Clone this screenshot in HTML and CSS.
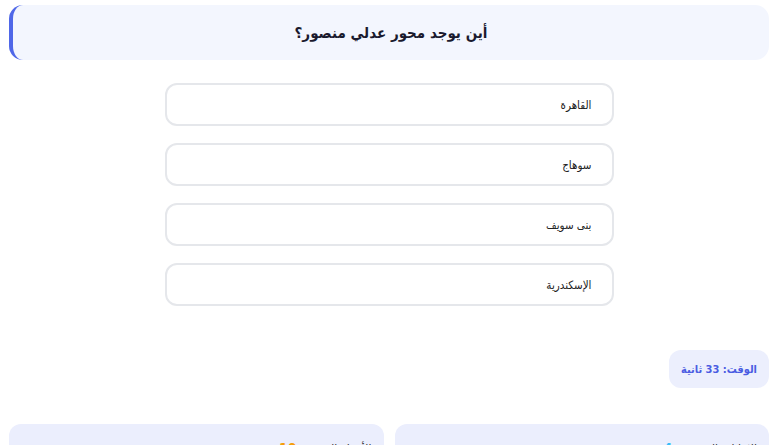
FILE: index.html
```html
<!DOCTYPE html>
<html lang="ar" dir="rtl">
<head>
<meta charset="utf-8">
<link rel="stylesheet" href="styles.css">
</head>
<body>
<div class="page">
  <div class="question">أين يوجد محور عدلي منصور؟</div>
  <div class="options">
    <div class="option">القاهرة</div>
    <div class="option">سوهاج</div>
    <div class="option">بنى سويف</div>
    <div class="option">الإسكندرية</div>
  </div>
  <div class="timer-row">
    <div class="timer">الوقت: 33 ثانية</div>
  </div>
  <div class="stats">
    <div class="stat">الإجابات الصحيحة: <span class="num blue">4</span></div>
    <div class="stat">الأسئلة المتبقية: <span class="num orange">10</span></div>
  </div>
</div>
</body>
</html>
```
FILE: styles.css
```css
html, body {
  margin: 0;
  padding: 0;
  background: #ffffff;
}
body {
  font-family: "DejaVu Sans Condensed", "DejaVu Sans", sans-serif;
  color: #1f2937;
}
.page {
  padding: 5px 11px 0 9px;
  display: flex;
  flex-direction: column;
}
.question {
  background: #f3f6fe;
  border-left: 4px solid #4f67e8;
  border-radius: 14px;
  height: 55px;
  display: flex;
  align-items: center;
  justify-content: center;
  font-size: 15px;
  font-weight: bold;
  color: #1a1a2e;
}
.options {
  display: flex;
  flex-direction: column;
  align-items: center;
  gap: 17px;
  margin-top: 23px;
}
.option {
  height: 39px;
  border: 2px solid #e5e7eb;
  border-radius: 12px;
  display: flex;
  align-items: center;
  padding: 0 20px;
  box-sizing: content-box;
  width: 405px;
  font-size: 11.5px;
  color: #222;
  background: #fff;
}
.timer-row {
  display: flex;
  margin-top: 44px;
}
.timer {
  background: #eceffd;
  color: #4a5ce2;
  font-weight: bold;
  font-size: 11px;
  border-radius: 12px;
  height: 38px;
  padding: 0 12px;
  display: flex;
  align-items: center;
}
.stats {
  display: flex;
  gap: 11px;
  margin-top: 36px;
}
.stat {
  flex: 1;
  background: #ebeefd;
  border-radius: 12px;
  height: 60px;
  padding: 16px 12px;
  font-size: 12px;
  color: #333;
}
.num { font-weight: bold; font-size: 14px; }
.blue { color: #38bdf8; }
.orange { color: #f59e0b; }
```
